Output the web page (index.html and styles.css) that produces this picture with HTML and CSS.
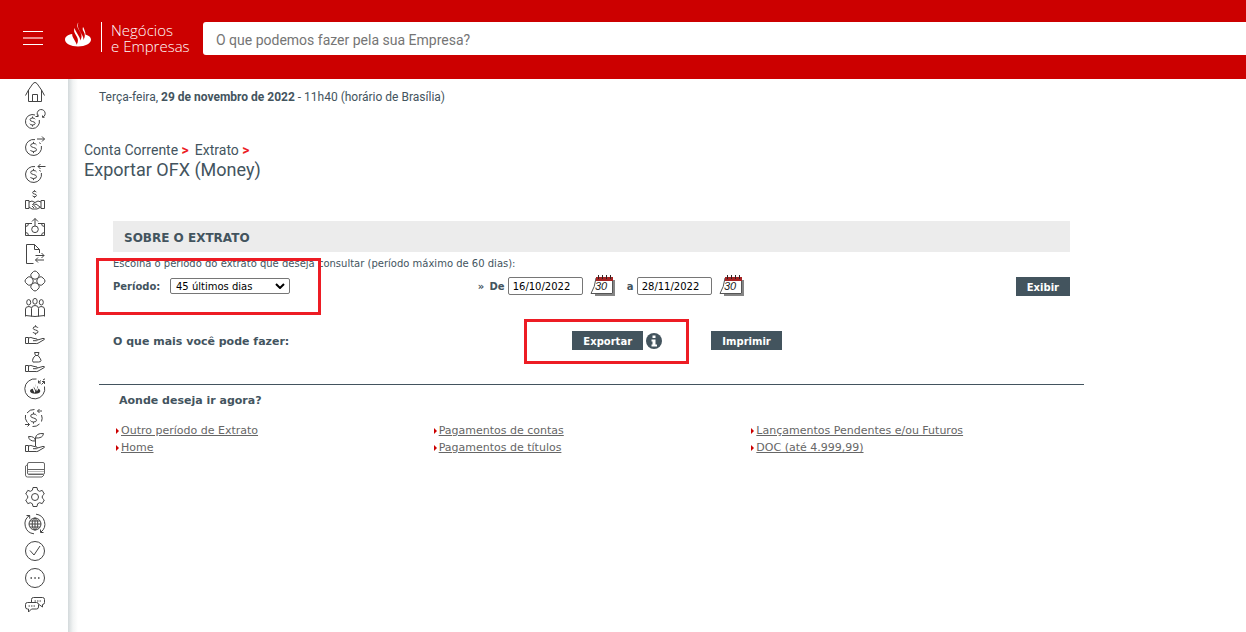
FILE: index.html
```html
<!DOCTYPE html>
<html lang="pt-BR">
<head>
<meta charset="utf-8">
<title>Exportar OFX (Money)</title>
<link rel="stylesheet" href="styles.css">
</head>
<body>
<svg class="defs" aria-hidden="true">
  <defs>
    <symbol id="dollar" viewBox="0 0 8 12"><path vector-effect="non-scaling-stroke" d="M7 3.4Q6.400 2 4 2Q1.200 2 1.200 4Q1.200 5.500 4 6Q7 6.500 7 8.200Q7 10 4 10Q1.400 10 1 8.500M4 .3V2M4 10V11.700"/></symbol>
    <symbol id="hand" viewBox="0 0 22 9"><path d="M1.500 1.500H4.500V7.500H1.500ZM4.500 2Q7 .8 9 2.200L13 3Q14 4.500 12.500 4.700H9M13.500 4L19 2.400Q21 2.300 20.300 3.500L14 7.200Q13 7.800 11 7.500H4.500"/></symbol>
    <symbol id="flame" viewBox="0 0 26 24"><path d="M13.400 0C12.200 3 13 5.200 14.200 7.400L17.600 13.600C18.300 14.900 18.600 16.200 18.400 17.500L18.900 16.600C20.200 14.400 20.100 11.800 18.900 9.600L18.300 8.500C17.500 7 17.600 5.600 18 4.500C18.900 5.300 19 6.500 19.700 8.200C20.300 9.600 20.500 10.700 20.400 11.900C24 12.900 26 14.700 26 17C26 21 20.300 24 13 24S0 21 0 17C0 14.300 2.900 12.300 7.200 11.600C7.100 13 7.600 14.300 8.300 15.600L10.800 20C11.400 21 11.500 21.600 11.500 22.200L12 21.400C13.300 19.200 13.200 16.700 12 14.500L10 11C8.900 9.100 8.800 7.300 9.700 5.500C9.900 6.800 10.300 7.700 10.900 8.800L14.500 15.100C15 16.100 15.300 17 15.200 18L15.700 17.100C16.900 15 16.800 12.400 15.600 10.300L13.100 6C11.800 3.800 12 1.700 13.400 0Z"/></symbol>
    <symbol id="calendar" viewBox="0 0 26 22">
      <path d="M7 5H25V21H5V19H23V5Z" fill="#858585"/>
      <path d="M6 3H22.500V18.500H1Q5 12 6 3Z" fill="#fff" stroke="#555"/>
      <path d="M6 2H23V6H6Z" fill="#a52323"/>
      <path d="M8.500 0V4M12.500 0V4M16.500 0V4M20.500 0V4" stroke="#332222"/>
      <text x="5" y="15" font-size="11" font-style="italic" fill="#222">30</text>
    </symbol>
  </defs>
</svg>

<header class="topbar">
  <button class="menu" type="button" aria-label="Menu"><span></span><span></span><span></span></button>
  <a class="brand" href="#">
    <svg class="brand-flame" aria-hidden="true"><use href="#flame"/></svg>
    <span class="brand-name">Negócios<br>e Empresas</span>
  </a>
  <input class="search" type="search" aria-label="Busca" placeholder="O que podemos fazer pela sua Empresa?">
</header>

<div class="page">
  <nav class="sidebar" aria-label="Atalhos">
    <a href="#" aria-label="Início"><svg viewBox="0 0 22 22"><path d="M1.500 14.500L4.500 9L9 2.500Q11 .2 13 2.500L17.500 9L20.500 14.500M4.500 9V20.500H17.500V9M8.500 20.500V13.500H13.500V20.500"/></svg></a>
    <a href="#" aria-label="Conta"><svg viewBox="0 0 22 22"><path d="M11 7A7 7 0 1 0 15.300 12M13.800 9V7.700A4 4 0 1 1 18.800 9.200M11.500 8.500H14V6.500M20.500 9.300H18.500V7.500"/><use href="#dollar" x="5" y="8" width="7" height="11"/></svg></a>
    <a href="#" aria-label="Transferências"><svg viewBox="0 0 22 22"><path d="M11 4.600A8 8 0 1 0 17.400 11M13 4H20.500M18 1.500L20.500 4L18 6.500M15.500 7.500L16.500 9"/><use href="#dollar" x="5.500" y="6.500" width="8" height="12"/></svg></a>
    <a href="#" aria-label="Recebimentos"><svg viewBox="0 0 22 22"><path d="M11 4.600A8 8 0 1 0 17.400 11M14 4.500H21.500M16.500 2L14 4.500L16.500 7M15.500 8L16.500 9.500"/><use href="#dollar" x="5.500" y="6.500" width="8" height="12"/></svg></a>
    <a href="#" aria-label="Negociação"><svg viewBox="0 0 22 22"><use href="#dollar" x="7.500" y="1" width="6" height="8"/><path d="M1.500 11.500H5V19.500H1.500ZM17 11.500H20.500V19.500H17ZM5 13L8 12L11 13.500L14 12L17 13M5 18L8 20H13L17 18M11 13.500L8.500 15.500Q10 17 12 15L16 18M8 17L10 19M10 16.500L12.500 19"/></svg></a>
    <a href="#" aria-label="Pagamentos"><svg viewBox="0 0 22 22"><path d="M8 7.500H1.500V19.500H20.500V7.500H14M11 10V2.500M8 5.500L11 2.500L14 5.500M1.500 10.500Q4.500 10.500 4.500 7.500M17.500 7.500Q17.500 10.500 20.500 10.500M1.500 16.500Q4.500 16.500 4.500 19.500M17.500 19.500Q17.500 16.500 20.500 16.500"/><circle cx="11" cy="13.300" r="3.300"/></svg></a>
    <a href="#" aria-label="Arquivos"><svg viewBox="0 0 22 22"><path d="M9.500 20.500H2.500V1.500H10.500L15.500 6.500V10M10.500 1.500V6.500H15.500M11.500 12.500H20M17.500 10L20 12.500L17.500 15M20 17H11.500M14 14.500L11.500 17L14 19.500"/></svg></a>
    <a href="#" aria-label="Produtos"><svg viewBox="0 0 22 22"><path d="M8.500 8.500L6.800 6Q6.500 4 8 3L9.500 1.500Q11 .5 12.500 1.500L14 3Q15.500 4 15.200 6L13.500 8.500Q11 10 8.500 8.500ZM8.500 13.500L6.800 16Q6.500 18 8 19L9.500 20.500Q11 21.500 12.500 20.500L14 19Q15.500 18 15.200 16L13.500 13.500Q11 12 8.500 13.500ZM8.500 8.500L6 6.800Q4 6.500 3 8L1.500 9.500Q.5 11 1.500 12.500L3 14Q4 15.500 6 15.200L8.500 13.500Q10 11 8.500 8.500ZM13.500 8.500L16 6.800Q18 6.500 19 8L20.500 9.500Q21.500 11 20.500 12.500L19 14Q18 15.500 16 15.200L13.500 13.500Q12 11 13.500 8.500Z"/></svg></a>
    <a href="#" aria-label="Folha de pagamento"><svg viewBox="0 0 22 22"><ellipse cx="4.700" cy="5.300" rx="2" ry="2.700"/><ellipse cx="11" cy="4.300" rx="2.200" ry="2.900"/><ellipse cx="17.300" cy="5.300" rx="2" ry="2.700"/><path d="M1.500 19.500V12Q1.500 9.500 5 9.500L7.500 10.500M14.500 10.500L17 9.500Q20.500 9.500 20.500 12V19.500M7.500 19.500V11.500Q7.500 8.500 11 8.500T14.500 11.500V19.500M1.500 18.500Q11 20.500 20.500 18.500"/></svg></a>
    <a href="#" aria-label="Crédito"><svg viewBox="0 0 22 22"><use href="#dollar" x="8" y="1" width="7" height="10"/><use href="#hand" y="12" width="22" height="9"/></svg></a>
    <a href="#" aria-label="Investimentos"><svg viewBox="0 0 22 22"><path d="M10.500 1.500H15L14 4.500H11.500ZM11.500 4.500Q8.500 7 8.500 9.500T11 11H14.500Q17 11 17 9.500T14 4.500"/><use href="#hand" y="13" width="22" height="9"/></svg></a>
    <a href="#" aria-label="Santander"><svg viewBox="0 0 22 22"><path d="M12.500 1A10 10 0 1 0 20.500 8.500M14 5L17 2.500M14.500 2.500V5H17M17.500 6.500L20.500 3.500M18 3.500H20.500V6M19 2L21 .8"/><use class="solid" href="#flame" x="6" y="6" width="10.500" height="10"/></svg></a>
    <a href="#" aria-label="Câmbio"><svg viewBox="0 0 22 22"><path d="M10.500 4.500A8.500 8.500 0 0 0 3 8M1.500 10A8.500 8.500 0 0 0 3 17M8.500 21.500A8.500 8.500 0 0 0 15.500 19M17.500 16.500A8.500 8.500 0 0 0 17.500 10M18 6H13.500M15.500 4L13.500 6L15.500 8M1 19.500H5.500M3.500 17.500L5.500 19.500L3.500 21.500"/><use href="#dollar" x="5" y="7" width="9" height="12"/></svg></a>
    <a href="#" aria-label="Sustentabilidade"><svg viewBox="0 0 22 22"><path d="M11.500 14V6M11.500 9Q5 9.500 4.500 4.500Q11 4 11.500 9M11.500 6Q12 1 19.500 1.500Q19 6.500 11.500 6"/><use href="#hand" y="12" width="22" height="9"/></svg></a>
    <a href="#" aria-label="Cartões"><svg class="muted" viewBox="0 0 22 22"><rect x="3.500" y="3.500" width="17" height="12" rx="1.500"/><path d="M3 6L1.500 7V16Q1.500 18 3.500 18H18L20 16M4 10.500H20"/><path class="soft" d="M4 12.500H20M4 14.500H20"/></svg></a>
    <a href="#" aria-label="Configurações"><svg viewBox="0 0 22 22"><path d="M9 1.500H13L13.600 4.200L15.600 5.300L18.200 4.400L20.300 8L18.300 9.900V12.100L20.300 14L18.200 17.600L15.600 16.700L13.600 17.800L13 20.500H9L8.400 17.800L6.400 16.700L3.800 17.600L1.700 14L3.700 12.100V9.900L1.700 8L3.800 4.400L6.400 5.300L8.400 4.200Z"/><circle cx="11" cy="11" r="3.500"/></svg></a>
    <a href="#" aria-label="Comércio exterior"><svg viewBox="0 0 22 22"><circle cx="11" cy="11" r="6"/><ellipse cx="11" cy="11" rx="2.800" ry="6"/><path d="M11 5V17M5 11H17M6 8H16M6 14H16M5.500 2.500A10 10 0 0 0 10 20.800M12 1.200A10 10 0 0 1 17 19M2.500 2.500H5.700V5.700M19.500 19.500H16.500V16.500"/></svg></a>
    <a href="#" aria-label="Aprovações"><svg viewBox="0 0 22 22"><circle cx="11" cy="11" r="9.500"/><path d="M6 10.500L10 15L16 6"/></svg></a>
    <a href="#" aria-label="Mais opções"><svg viewBox="0 0 22 22"><circle cx="11" cy="11" r="9.500"/><path d="M6.500 11H8M10.300 11H11.800M14 11H15.500" stroke-width="1.500"/></svg></a>
    <a href="#" aria-label="Atendimento"><svg viewBox="0 0 22 22"><path d="M7.500 8V5.500Q7.500 3.500 9.500 3.500H18.500Q20.500 3.500 20.500 5.500V8.500Q20.500 10.500 18.500 10.500V13L15 10.500M3.500 8.500H12.500Q14.500 8.500 14.500 10.500V13Q14.500 15 12.500 15H7.500L4.500 18V15H3.500Q1.500 15 1.500 13V10.500Q1.500 8.500 3.500 8.500"/><path d="M10.500 7H18M4.500 12H12" stroke-dasharray="1.500 1"/></svg></a>
  </nav>

  <main class="content">
    <p class="today">Terça-feira, <b>29 de novembro de 2022</b> - 11h40 (horário de Brasília)</p>
    <nav class="crumbs" aria-label="Caminho">Conta Corrente <b>&gt;</b><span>Extrato <b>&gt;</b></span></nav>
    <h1 class="title">Exportar OFX (Money)</h1>

    <div class="sheet">
      <form class="panel">
        <h2 class="panel-title">SOBRE O EXTRATO</h2>
        <div class="query">
          <p class="hint">Escolha o período do extrato que deseja consultar (período máximo de 60 dias):</p>
          <div class="filters">
            <div class="period">
              <label for="periodo">Período:</label>
              <select id="periodo"><option>45 últimos dias</option></select>
              <svg class="chevron" viewBox="0 0 10 6" aria-hidden="true"><path d="M1 1L5 5L9 1"/></svg>
            </div>
            <div class="dates">
              <label class="from" for="de"><span>»</span><span>De</span></label>
              <input id="de" type="text" value="16/10/2022">
              <button class="cal" type="button" aria-label="Escolher data inicial"><svg><use href="#calendar"/></svg></button>
              <label for="ate">a</label>
              <input id="ate" type="text" value="28/11/2022">
              <button class="cal" type="button" aria-label="Escolher data final"><svg><use href="#calendar"/></svg></button>
            </div>
            <button class="btn" type="button">Exibir</button>
          </div>
          <span class="mark mark-period"></span>
        </div>
        <div class="actions">
          <b>O que mais você pode fazer:</b>
          <div class="export">
            <button class="btn" type="button">Exportar</button>
            <svg class="info" viewBox="0 0 16 16" role="img" aria-label="Informação"><circle cx="8" cy="8" r="8" fill="#43545e"/><path d="M6.500 2.500H9.500V5H6.500ZM5.500 6.500H9.500V11.500H11V13.500H5.500V11.500H6.500V8.500H5.500Z" fill="#fff"/></svg>
            <span class="mark mark-export"></span>
          </div>
          <div><button class="btn" type="button">Imprimir</button></div>
        </div>
      </form>

      <section class="next">
        <h2 class="next-title">Aonde deseja ir agora?</h2>
        <div class="links">
          <ul><li><a href="#">Outro período de Extrato</a></li><li><a href="#">Home</a></li></ul>
          <ul><li><a href="#">Pagamentos de contas</a></li><li><a href="#">Pagamentos de títulos</a></li></ul>
          <ul><li><a href="#">Lançamentos Pendentes e/ou Futuros</a></li><li><a href="#">DOC (até 4.999,99)</a></li></ul>
        </div>
      </section>
    </div>
  </main>
</div>
</body>
</html>
```
FILE: styles.css
```css
* { box-sizing: border-box; }
body {
  margin: 0;
  min-height: 100vh;
  display: flex;
  flex-direction: column;
  background: #fff;
  color: #43545e;
  font-family: Verdana, "DejaVu Sans", sans-serif;
  font-size: 11px;
}
h1, h2, p, ul { margin: 0; padding: 0; }
ul { list-style: none; }
button { border: 0; padding: 0; background: none; font-family: inherit; cursor: pointer; }
.defs { position: absolute; width: 0; height: 0; }

.topbar {
  display: flex;
  align-items: flex-start;
  padding: 22px 0 24px 23px;
  background: #c00;
}
.menu {
  width: 20px;
  margin: 9px 22px 0 0;
  display: flex;
  flex-direction: column;
  justify-content: space-between;
  height: 14px;
}
.menu span { height: 1px; width: 100%; background: #fff; }
.menu span:nth-child(2) { height: 2px; background: #e88; }
.brand { display: flex; width: 138px; color: #fff; text-decoration: none; }
.brand-flame { width: 26px; height: 25px; fill: #fff; flex: none; }
.brand-name {
  height: 30px;
  margin-left: 10px;
  padding-left: 9px;
  border-left: 1px solid #fff;
  font: 300 15px/16px "Open Sans", sans-serif;
  white-space: nowrap;
}
.search {
  flex: 1;
  min-width: 0;
  height: 33px;
  padding: 2px 13px 0;
  border: 0;
  border-radius: 3px 0 0 3px;
  background: #fff;
  font: 14px Roboto, sans-serif;
}
.search::placeholder { color: #757575; }

.page { flex: 1; display: flex; }
.sidebar {
  width: 68px;
  flex: none;
  display: flex;
  flex-direction: column;
  gap: 5px;
  padding: 2px 0 2px 24px;
}
.sidebar a { width: 22px; height: 22px; }
.sidebar svg {
  display: block;
  width: 22px;
  height: 22px;
  fill: none;
  stroke: #444;
  stroke-width: 1;
}
.sidebar .muted { stroke: #666; }
.sidebar .solid { fill: #333; stroke: none; }
.sidebar .soft { stroke: #bbb; stroke-width: 1; }

.content {
  flex: 1;
  min-width: 0;
  padding: 9px 16px 16px;
  background: linear-gradient(to right, #d3d9db, #f2f4f4 5px, #fff 10px);
}
.today { margin-left: 15px; font: 12px/18px Roboto, sans-serif; }
.crumbs { margin-top: 35px; font: 14px/18px Roboto, sans-serif; }
.crumbs b { color: #ec1c24; }
.crumbs span { margin-left: 6px; }
.title { font: 400 18px/22px Roboto, sans-serif; }

.sheet { max-width: 985px; margin: 40px 0 0 15px; }
.panel { padding: 0 14px 34px; }
.panel-title {
  padding: 3px 11px 0;
  background: #ececec;
  font-size: 12px;
  line-height: 28px;
}
.query { position: relative; padding-top: 5px; }
.hint { font-size: 10px; line-height: 14px; }
.filters {
  display: grid;
  grid-template-columns: 38% 1fr auto;
  align-items: center;
  margin-top: 4px;
  font-size: 10px;
  font-weight: bold;
}
.period { position: relative; display: flex; align-items: center; }
.period label { width: 57px; }
.period select {
  width: 120px;
  height: 16px;
  padding: 0 5px;
  border: 1px solid #767676;
  border-radius: 2px;
  appearance: none;
  background: #fff;
  color: #000;
  font: 10px Verdana, "DejaVu Sans", sans-serif;
}
.chevron {
  position: absolute;
  left: 162px;
  width: 10px;
  height: 6px;
  fill: none;
  stroke: #000;
  stroke-width: 2;
  pointer-events: none;
}
.dates { display: flex; align-items: center; padding-left: 1px; }
.dates .from { display: flex; justify-content: space-between; width: 30px; padding-right: 3px; }
.dates input {
  width: 75px;
  height: 18px;
  padding: 0 4px;
  border: 1px solid #767676;
  border-radius: 2px;
  font: 10px Verdana, "DejaVu Sans", sans-serif;
}
.cal { width: 26px; height: 22px; margin: 0 7px; }
.cal svg { display: block; width: 26px; height: 22px; font-family: "Liberation Sans", sans-serif; }
.cal + label { width: 14px; padding-left: 4px; }
.btn {
  height: 19px;
  padding: 2px 11px 0;
  background: #43545e;
  color: #fff;
  font-size: 10px;
  font-weight: bold;
}
.mark { position: absolute; border: 3px solid #ed1c24; pointer-events: none; }
.mark-period { left: -17px; top: 6px; width: 225px; height: 57px; }
.actions {
  display: grid;
  grid-template-columns: 48% 139px 1fr;
  align-items: center;
  margin-top: 34px;
}
.actions > b { padding-top: 2px; }
.export { position: relative; display: flex; align-items: center; gap: 3px; }
.info { width: 16px; height: 16px; }
.mark-export { left: -48px; top: -12px; width: 165px; height: 45px; }

.next { border-top: 1px solid #43545e; padding: 7px 15px 0 17px; }
.next-title { padding-left: 3px; font-size: 11px; line-height: 17px; }
.links { display: grid; grid-template-columns: repeat(3, 1fr); margin-top: 13px; }
.links li { display: flex; align-items: center; line-height: 17px; }
.links li::before {
  content: "";
  border: 3px solid transparent;
  border-left: 3px solid #c00;
  border-right: 0;
  margin-right: 2px;
}
.links a { color: #666; }
```
